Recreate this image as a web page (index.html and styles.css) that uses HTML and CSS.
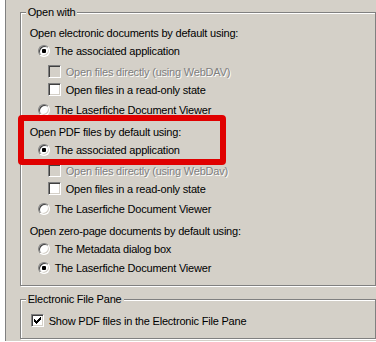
FILE: index.html
```html
<!DOCTYPE html>
<html lang="en">
<head>
    <meta charset="UTF-8">
    <meta name="viewport" content="width=device-width, initial-scale=1.0">
    <title>Open with options</title>
    <link rel="stylesheet" href="styles.css">
</head>
<body>
    <div class="side"></div>

    <div class="panel">
        <!-- Open with -->
        <fieldset class="group group-open">
            <legend>Open with</legend>

            <div class="row hd">Open electronic documents by default using:</div>
            <div class="row opt"><span class="radio on"></span>The associated application</div>
            <div class="row sub disabled"><span class="check"></span>Open files directly (using WebDAV)</div>
            <div class="row sub"><span class="check"></span>Open files in a read-only state</div>
            <div class="row opt"><span class="radio"></span>The Laserfiche Document Viewer</div>

            <div class="row hd">Open PDF files by default using:</div>
            <div class="row opt"><span class="radio on"></span>The associated application</div>
            <div class="row sub disabled"><span class="check"></span>Open files directly (using WebDav)</div>
            <div class="row sub"><span class="check"></span>Open files in a read-only state</div>
            <div class="row opt"><span class="radio"></span>The Laserfiche Document Viewer</div>

            <div class="row hd">Open zero-page documents by default using:</div>
            <div class="row opt"><span class="radio"></span>The Metadata dialog box</div>
            <div class="row opt"><span class="radio on"></span>The Laserfiche Document Viewer</div>
        </fieldset>

        <!-- Electronic File Pane -->
        <fieldset class="group group-pane">
            <legend>Electronic File Pane</legend>
            <div class="row"><span class="check">
                <svg width="7" height="7" viewBox="0 0 7 7" shape-rendering="crispEdges">
                    <rect x="0" y="2" width="1" height="3"/>
                    <rect x="1" y="3" width="1" height="3"/>
                    <rect x="2" y="4" width="1" height="3"/>
                    <rect x="3" y="3" width="1" height="3"/>
                    <rect x="4" y="2" width="1" height="3"/>
                    <rect x="5" y="1" width="1" height="3"/>
                    <rect x="6" y="0" width="1" height="3"/>
                </svg>
            </span>Show PDF files in the Electronic File Pane</div>
        </fieldset>
    </div>

    <!-- highlight round the PDF setting -->
    <div class="highlight"></div>
</body>
</html>
```

FILE: styles.css
```css
/* basic */
html {
    background-color: #fff;
}

body {
    margin: 0;
    height: 341px;
    overflow: hidden;
    display: flex;
    background-color: #d4d0c8;
    font-family: "Liberation Sans", Arial, sans-serif;
    font-size: 11px;
    letter-spacing: -0.2px;
    color: #000;
}

.side {
    width: 5px;
    background-color: #fff;
    border-right: 1px solid #808080;
}

.panel {
    padding-left: 14px;
    width: 380px;
}

/* group boxes */
.group {
    margin: 6px 0 0 0;
    border: 1px solid #808080;
    box-shadow: inset 1px 1px 0 #fff, 1px 1px 0 #fff;
    min-width: 0;
}

.group legend {
    padding: 0 2px;
    line-height: 13px;
    background-color: #d4d0c8;
}

.group-open {
    padding: 5px 0 9px 9px;
}

.group-open legend {
    margin-left: -4px;
}

.group-pane {
    margin-top: 7px;
    padding: 6px 0 9px 10px;
}

.group-pane legend {
    margin-left: -5px;
}

/* rows */
.row {
    height: 17px;
    display: flex;
    align-items: center;
    white-space: nowrap;
}

.row.opt {
    padding-left: 8px;
}

.row.sub {
    padding-left: 18px;
}

.hd + .opt { margin-top: 1px; }
.opt + .sub { margin-top: 4px; }
.sub + .sub { margin-top: 1px; }
.sub + .opt { margin-top: 3px; }
.opt + .hd { margin-top: 5px; }
.opt + .opt { margin-top: 2px; }

.disabled {
    color: #808080;
    text-shadow: 1px 1px 0 #fff;
}

/* radio buttons */
.radio {
    position: relative;
    width: 12px;
    height: 12px;
    box-sizing: border-box;
    margin-right: 5px;
    border-radius: 50%;
    border: 1px solid;
    border-color: #808080 #fff #fff #808080;
    box-shadow: inset 1px 1px 0 #404040, inset -1px -1px 0 #d4d0c8;
    background-color: #fff;
    flex-shrink: 0;
}

.radio.on::after {
    content: "";
    position: absolute;
    left: 3px;
    top: 3px;
    width: 4px;
    height: 4px;
    border-radius: 1px;
    background-color: #000;
}

/* check boxes */
.check {
    width: 13px;
    height: 13px;
    box-sizing: border-box;
    margin-right: 5px;
    border: 1px solid;
    border-color: #808080 #fff #fff #808080;
    box-shadow: inset 1px 1px 0 #404040, inset -1px -1px 0 #d4d0c8;
    background-color: #fff;
    display: flex;
    align-items: center;
    justify-content: center;
    flex-shrink: 0;
}

.disabled .check {
    background-color: #d4d0c8;
}

.check svg {
    display: block;
    fill: #000;
}

/* red annotation */
.highlight {
    position: absolute;
    left: 18px;
    top: 115px;
    width: 208px;
    height: 50px;
    box-sizing: border-box;
    border: 6px solid #e00000;
    border-radius: 4px;
}
```
